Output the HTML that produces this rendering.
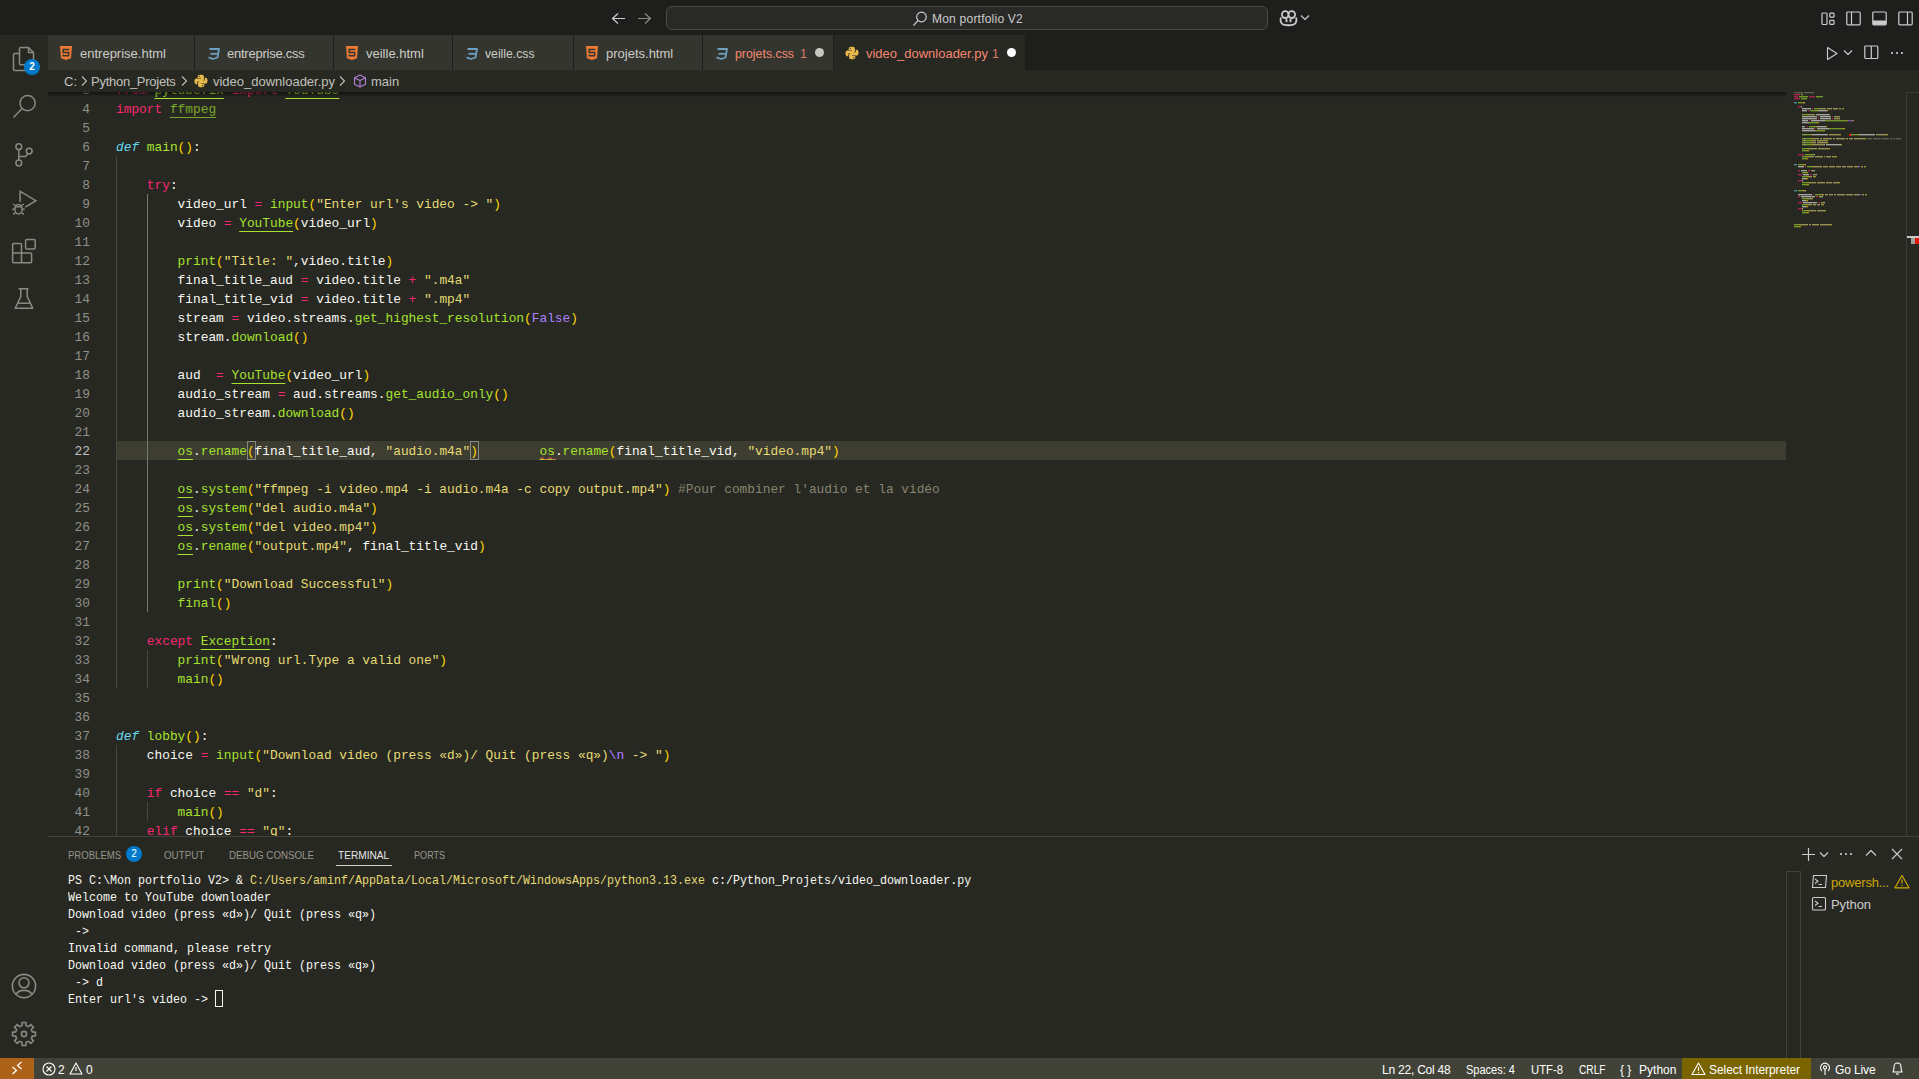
<!DOCTYPE html><html><head><meta charset="utf-8"><style>
*{margin:0;padding:0;box-sizing:border-box}
html,body{width:1919px;height:1079px;overflow:hidden;background:#272822}
body{position:relative;font-family:"Liberation Sans",sans-serif}
.abs{position:absolute}
.ui{position:absolute;white-space:pre;font-family:"Liberation Sans",sans-serif}
.ln{position:absolute;left:116px;height:19px;line-height:19px;white-space:pre;font-family:"Liberation Mono",monospace;font-size:12.83px;color:#f8f8f2}
.num{position:absolute;left:50px;width:40px;text-align:right;height:19px;line-height:19px;font-family:"Liberation Mono",monospace;font-size:12.83px;color:#90908a}
.num.act{color:#c2c2bf}
.k,.o{color:#f92672}.d{color:#66d9ef;font-style:italic}.f{color:#a6e22e}
.c{color:#a6e22e;text-decoration:underline;text-underline-offset:4px;text-decoration-thickness:1px}
.s{color:#e6db74}.n{color:#ae81ff}.m{color:#88846f}.p{color:#f8f8f2}.b{color:#ffd700}
.tl{position:absolute;left:68px;height:17px;line-height:17px;white-space:pre;font-family:"Liberation Mono",monospace;font-size:13px;transform:scaleX(0.8974);transform-origin:0 0}
.tf{color:#f8f8f2}.ty{color:#e6db74}
.tab{position:absolute;top:35px;height:35px;background:#34352f}
.tab .t{position:absolute;top:0;line-height:35px;font-size:13px;color:#ccccc7;white-space:pre}
</style></head><body>
<div class="abs" style="left:0;top:0;width:1919px;height:35px;background:#1e1f1c"></div>
<svg style="position:absolute;left:611px;top:12px" width="15" height="13" viewBox="0 0 15 13" ><path d="M7 1.5 L1.5 6.5 L7 11.5 M1.5 6.5 H14" fill="none" stroke="#cccccc" stroke-width="1.2" stroke-linejoin="round"/></svg>
<svg style="position:absolute;left:637px;top:12px" width="15" height="13" viewBox="0 0 15 13" ><path d="M8 1.5 L13.5 6.5 L8 11.5 M13.5 6.5 H1" fill="none" stroke="#8b8b87" stroke-width="1.2" stroke-linejoin="round"/></svg>
<div class="abs" style="left:666px;top:6px;width:602px;height:24px;border:1px solid #4a4a47;border-radius:6px;background:#292a27"></div>
<svg style="position:absolute;left:912px;top:11px" width="16" height="16" viewBox="0 0 16 16" ><g fill="none" stroke="#cccccc" stroke-width="1.2"><circle cx="9.5" cy="6" r="4.8"/><path d="M6.2 9.4 L1.5 14.5"/></g></svg>
<div class="ui" style="left:932px;top:11px;font-size:12px;line-height:16px;color:#cccccc;font-weight:400;letter-spacing:0.226px">Mon portfolio V2</div>
<svg style="position:absolute;left:1279px;top:9px" width="19" height="18" viewBox="0 0 19 18" ><g fill="none" stroke="#cccccc" stroke-width="1.8"><circle cx="6.3" cy="5.6" r="3.4"/><circle cx="12.7" cy="5.6" r="3.4"/><path d="M2.2 8.5 C1 10 1.2 14.6 4.5 15.6 C7.5 16.4 11.5 16.4 14.5 15.6 C17.8 14.6 18 10 16.8 8.5"/></g><rect x="6.6" y="10" width="1.8" height="3.2" fill="#cccccc"/><rect x="10.6" y="10" width="1.8" height="3.2" fill="#cccccc"/></svg>
<svg style="position:absolute;left:1300px;top:14px" width="10" height="7" viewBox="0 0 10 7" ><path d="M1 1.5 L5 5.5 L9 1.5" fill="none" stroke="#cccccc" stroke-width="1.1" stroke-linejoin="round"/></svg>
<svg style="position:absolute;left:1821px;top:12px" width="15" height="14" viewBox="0 0 15 14" ><g fill="none" stroke="#cccccc" stroke-width="1.2"><rect x="1" y="1" width="5" height="11.5" rx="1"/><rect x="8.8" y="1.2" width="4.2" height="4" rx="0.8"/><rect x="8.8" y="8.3" width="4.2" height="4" rx="0.8"/></g></svg>
<svg style="position:absolute;left:1846px;top:11px" width="15" height="15" viewBox="0 0 15 15" ><g fill="none" stroke="#cccccc" stroke-width="1.2"><rect x="0.8" y="1" width="13.4" height="12.8" rx="1"/><path d="M5.5 1 V13.8"/></g></svg>
<svg style="position:absolute;left:1872px;top:11px" width="15" height="15" viewBox="0 0 15 15" ><g fill="none" stroke="#cccccc" stroke-width="1.2"><rect x="0.8" y="1" width="13.4" height="12.8" rx="1"/></g><rect x="0.8" y="9.5" width="13.4" height="4.3" rx="1" fill="#cccccc"/></svg>
<svg style="position:absolute;left:1898px;top:11px" width="15" height="15" viewBox="0 0 15 15" ><g fill="none" stroke="#cccccc" stroke-width="1.2"><rect x="0.8" y="1" width="13.4" height="12.8" rx="1"/><path d="M9.5 1 V13.8"/></g></svg>
<div class="abs" style="left:0;top:35px;width:48px;height:1023px;background:#272822"></div>
<svg style="position:absolute;left:12px;top:45px" width="26" height="28" viewBox="0 0 26 28" ><g fill="none" stroke="#8a8a84" stroke-width="1.5" stroke-linejoin="round"><path d="M8.5 2.5 H16.5 L21.5 7.5 V18.8 A1 1 0 0 1 20.5 19.8 H8.5 A1 1 0 0 1 7.5 18.8 V3.5 A1 1 0 0 1 8.5 2.5 Z"/><path d="M16.5 2.5 V7.5 H21.5"/><path d="M7.5 8.5 H2.5 A1 1 0 0 0 1.5 9.5 V24.5 A1 1 0 0 0 2.5 25.5 H14"/></g></svg><div style="position:absolute;left:24px;top:59px;width:16px;height:16px;border-radius:8px;background:#007acc;color:#fff;font:600 10px/16px 'Liberation Sans',sans-serif;text-align:center">2</div><svg style="position:absolute;left:12px;top:93px" width="26" height="26" viewBox="0 0 26 26" ><g fill="none" stroke="#8a8a84" stroke-width="1.5"><circle cx="15.6" cy="10.2" r="7.6"/><path d="M10.2 15.6 L1.5 24.6"/></g></svg><svg style="position:absolute;left:12px;top:140px" width="26" height="28" viewBox="0 0 26 28" ><g fill="none" stroke="#8a8a84" stroke-width="1.5"><circle cx="6.8" cy="6.7" r="2.9"/><circle cx="6.8" cy="23" r="2.9"/><circle cx="17.2" cy="11.1" r="2.9"/><path d="M6.8 9.6 V20.1"/><path d="M16 13.8 L13.5 16.6 H6.8"/></g></svg><svg style="position:absolute;left:10px;top:190px" width="28" height="28" viewBox="0 0 28 28" ><g fill="none" stroke="#8a8a84" stroke-width="1.5"><path d="M10.1 12 V1.4 L25.9 10.7 L15.3 17.2"/><ellipse cx="8.5" cy="19.2" rx="3.6" ry="4.8"/><path d="M5 16.8 H12 M4.9 19.2 H2.3 M12.1 19.2 H14.7 M5.3 15.5 L3.2 14 M11.7 15.5 L13.8 14 M5.3 22.8 L3.2 24.3 M11.7 22.8 L13.8 24.3"/></g></svg><svg style="position:absolute;left:11px;top:238px" width="26" height="28" viewBox="0 0 26 28" ><g fill="none" stroke="#8a8a84" stroke-width="1.5" stroke-linejoin="round"><rect x="14.6" y="1.4" width="9.6" height="9.6" rx="1.3"/><path d="M2.6 5.6 H9.5 A1 1 0 0 1 10.5 6.6 V15 H19.6 A1 1 0 0 1 20.6 16 V23.8 A1 1 0 0 1 19.6 24.8 H2.6 A1 1 0 0 1 1.6 23.8 V6.6 A1 1 0 0 1 2.6 5.6 Z"/><path d="M1.6 15 H10.5 V24.8"/></g></svg><svg style="position:absolute;left:13px;top:287px" width="24" height="28" viewBox="0 0 24 28" ><g fill="none" stroke="#8a8a84" stroke-width="1.5" stroke-linejoin="round"><path d="M5.5 1.8 H15.5 M7.8 1.8 V9.5 L2.2 21.2 H19.8 L14.2 9.5 V1.8"/><path d="M4.8 16.2 H17.2"/></g></svg><svg style="position:absolute;left:10px;top:972px" width="28" height="28" viewBox="0 0 28 28" ><g fill="none" stroke="#8a8a84" stroke-width="1.6"><circle cx="14" cy="14" r="11.6"/><circle cx="14" cy="10.8" r="5"/><path d="M6.3 22.6 C8 17 20 17 21.7 22.6"/></g></svg><svg style="position:absolute;left:10px;top:1020px" width="28" height="28" viewBox="0 0 28 28" ><g fill="none" stroke="#8a8a84" stroke-width="1.6" stroke-linejoin="miter"><path d="M11.92 5.66 L12.19 2.54 L15.81 2.54 L16.08 5.66 L18.43 6.63 L20.82 4.62 L23.38 7.18 L21.37 9.57 L22.34 11.92 L25.46 12.19 L25.46 15.81 L22.34 16.08 L21.37 18.43 L23.38 20.82 L20.82 23.38 L18.43 21.37 L16.08 22.34 L15.81 25.46 L12.19 25.46 L11.92 22.34 L9.57 21.37 L7.18 23.38 L4.62 20.82 L6.63 18.43 L5.66 16.08 L2.54 15.81 L2.54 12.19 L5.66 11.92 L6.63 9.57 L4.62 7.18 L7.18 4.62 L9.57 6.63 Z"/><circle cx="14" cy="14" r="2.6"/></g></svg>
<div class="abs" style="left:48px;top:35px;width:1871px;height:35px;background:#1e1f1c"></div>
<div class="abs" style="left:48px;top:35px;width:146px;height:35px;background:#34352f"></div>
<svg style="position:absolute;left:60px;top:46px" width="12" height="14" viewBox="0 0 12 14" ><path d="M0 0 H12 L11 12.3 L6 14 L1 12.3 Z" fill="#ec7b37"/><path d="M9.3 3.4 H3.2 V6.5 H8.6 V9.8 H3.2 V8.6" fill="none" stroke="#34352f" stroke-width="1.5"/></svg>
<div class="ui" style="left:80px;top:46px;font-size:13px;line-height:16px;color:#ccccc7;font-weight:400">entreprise.html</div>
<div class="abs" style="left:195px;top:35px;width:138px;height:35px;background:#34352f"></div>
<svg style="position:absolute;left:207px;top:47px" width="13" height="13" viewBox="0 0 13 13" ><g fill="none" stroke="#6c9fc0" stroke-width="1.8" stroke-linejoin="round"><path d="M2.5 2 H12 L10.5 10.5 L6 12 L1.5 10.3"/><path d="M3.5 6.8 H10.5"/></g></svg>
<div class="ui" style="left:227px;top:46px;font-size:13px;line-height:16px;color:#ccccc7;font-weight:400;letter-spacing:-0.244px">entreprise.css</div>
<div class="abs" style="left:334px;top:35px;width:118px;height:35px;background:#34352f"></div>
<svg style="position:absolute;left:346px;top:46px" width="12" height="14" viewBox="0 0 12 14" ><path d="M0 0 H12 L11 12.3 L6 14 L1 12.3 Z" fill="#ec7b37"/><path d="M9.3 3.4 H3.2 V6.5 H8.6 V9.8 H3.2 V8.6" fill="none" stroke="#34352f" stroke-width="1.5"/></svg>
<div class="ui" style="left:366px;top:46px;font-size:13px;line-height:16px;color:#ccccc7;font-weight:400">veille.html</div>
<div class="abs" style="left:453px;top:35px;width:120px;height:35px;background:#34352f"></div>
<svg style="position:absolute;left:465px;top:47px" width="13" height="13" viewBox="0 0 13 13" ><g fill="none" stroke="#6c9fc0" stroke-width="1.8" stroke-linejoin="round"><path d="M2.5 2 H12 L10.5 10.5 L6 12 L1.5 10.3"/><path d="M3.5 6.8 H10.5"/></g></svg>
<div class="ui" style="left:485px;top:46px;font-size:13px;line-height:16px;color:#ccccc7;font-weight:400;transform:scaleX(0.9384);transform-origin:0 0">veille.css</div>
<div class="abs" style="left:574px;top:35px;width:128px;height:35px;background:#34352f"></div>
<svg style="position:absolute;left:586px;top:46px" width="12" height="14" viewBox="0 0 12 14" ><path d="M0 0 H12 L11 12.3 L6 14 L1 12.3 Z" fill="#ec7b37"/><path d="M9.3 3.4 H3.2 V6.5 H8.6 V9.8 H3.2 V8.6" fill="none" stroke="#34352f" stroke-width="1.5"/></svg>
<div class="ui" style="left:606px;top:46px;font-size:13px;line-height:16px;color:#ccccc7;font-weight:400">projets.html</div>
<div class="abs" style="left:703px;top:35px;width:130px;height:35px;background:#34352f"></div>
<svg style="position:absolute;left:715px;top:47px" width="13" height="13" viewBox="0 0 13 13" ><g fill="none" stroke="#6c9fc0" stroke-width="1.8" stroke-linejoin="round"><path d="M2.5 2 H12 L10.5 10.5 L6 12 L1.5 10.3"/><path d="M3.5 6.8 H10.5"/></g></svg>
<div class="ui" style="left:735px;top:46px;font-size:13px;line-height:16px;color:#f48771;font-weight:400;transform:scaleX(0.9495);transform-origin:0 0">projets.css</div>
<div class="ui" style="left:800px;top:46px;font-size:12.5px;line-height:16px;color:#d8796c">1</div>
<div style="position:absolute;left:815px;top:48px;width:9px;height:9px;border-radius:5px;background:#c8c8c3"></div>
<div class="abs" style="left:834px;top:35px;width:191px;height:35px;background:#272822"></div>
<svg style="position:absolute;left:845px;top:46px" width="14" height="14" viewBox="0 0 14 14" ><path d="M6.9 0.8 C3.5 0.8 3.7 2.3 3.7 2.3 V3.9 H7 V4.4 H2.4 C2.4 4.4 0.5 4.2 0.5 7.3 C0.5 10.4 2.2 10.3 2.2 10.3 H3.3 V8.7 C3.3 8.7 3.2 7 5 7 H8.2 C8.2 7 9.9 7 9.9 5.4 V2.6 C9.9 2.6 10.1 0.8 6.9 0.8 Z" fill="#e8b94b"/><path d="M7.1 13.2 C10.5 13.2 10.3 11.7 10.3 11.7 V10.1 H7 V9.6 H11.6 C11.6 9.6 13.5 9.8 13.5 6.7 C13.5 3.6 11.8 3.7 11.8 3.7 H10.7 V5.3 C10.7 5.3 10.8 7 9 7 H5.8 C5.8 7 4.1 7 4.1 8.6 V11.4 C4.1 11.4 3.9 13.2 7.1 13.2 Z" fill="#e8b94b"/><circle cx="5.3" cy="2.3" r="0.6" fill="#272822"/><circle cx="8.7" cy="11.7" r="0.6" fill="#272822"/></svg>
<div class="ui" style="left:866px;top:46px;font-size:13px;line-height:16px;color:#f48771;font-weight:400;letter-spacing:-0.008px">video_downloader.py</div>
<div class="ui" style="left:992px;top:46px;font-size:12.5px;line-height:16px;color:#d8796c">1</div>
<div style="position:absolute;left:1007px;top:48px;width:9px;height:9px;border-radius:5px;background:#ffffff"></div>
<svg style="position:absolute;left:1826px;top:46px" width="12" height="15" viewBox="0 0 12 15" ><path d="M1.5 1.5 L11 7.5 L1.5 13.5 Z" fill="none" stroke="#cccccc" stroke-width="1.1" stroke-linejoin="round"/></svg>
<svg style="position:absolute;left:1843px;top:49px" width="10" height="7" viewBox="0 0 10 7" ><path d="M1 1.5 L5 5.5 L9 1.5" fill="none" stroke="#cccccc" stroke-width="1.1" stroke-linejoin="round"/></svg>
<svg style="position:absolute;left:1864px;top:45px" width="15" height="15" viewBox="0 0 15 15" ><g fill="none" stroke="#cccccc" stroke-width="1.2"><rect x="0.8" y="1" width="13" height="12.5" rx="1"/><path d="M7.3 1 V13.5"/></g></svg>
<svg style="position:absolute;left:1890px;top:51px" width="16" height="4" viewBox="0 0 16 4" ><circle cx="2" cy="2" r="1.1" fill="#cccccc"/><circle cx="7" cy="2" r="1.1" fill="#cccccc"/><circle cx="12" cy="2" r="1.1" fill="#cccccc"/></svg>
<div class="abs" style="left:48px;top:92px;width:1871px;height:744px;overflow:hidden">
<div class="abs" style="left:-48px;top:-92px;width:1919px;height:1079px">
<div class="abs" style="left:116px;top:441px;width:1670px;height:19px;background:#3e3d32"></div>
<div class="abs" style="left:116px;top:156px;width:1px;height:532px;background:#464741"></div>
<div class="abs" style="left:147px;top:194px;width:1px;height:418px;background:#767771"></div>
<div class="abs" style="left:147px;top:650px;width:1px;height:38px;background:#464741"></div>
<div class="abs" style="left:116px;top:745px;width:1px;height:95px;background:#464741"></div>
<div class="abs" style="left:147px;top:802px;width:1px;height:19px;background:#464741"></div>
<div class="abs" style="left:247px;top:441px;width:9px;height:19px;border:1px solid #888886"></div>
<div class="abs" style="left:470px;top:441px;width:9px;height:19px;border:1px solid #888886"></div>
<div class="num" style="top:81px">3</div>
<div class="num" style="top:100px">4</div>
<div class="num" style="top:119px">5</div>
<div class="num" style="top:138px">6</div>
<div class="num" style="top:157px">7</div>
<div class="num" style="top:176px">8</div>
<div class="num" style="top:195px">9</div>
<div class="num" style="top:214px">10</div>
<div class="num" style="top:233px">11</div>
<div class="num" style="top:252px">12</div>
<div class="num" style="top:271px">13</div>
<div class="num" style="top:290px">14</div>
<div class="num" style="top:309px">15</div>
<div class="num" style="top:328px">16</div>
<div class="num" style="top:347px">17</div>
<div class="num" style="top:366px">18</div>
<div class="num" style="top:385px">19</div>
<div class="num" style="top:404px">20</div>
<div class="num" style="top:423px">21</div>
<div class="num act" style="top:442px">22</div>
<div class="num" style="top:461px">23</div>
<div class="num" style="top:480px">24</div>
<div class="num" style="top:499px">25</div>
<div class="num" style="top:518px">26</div>
<div class="num" style="top:537px">27</div>
<div class="num" style="top:556px">28</div>
<div class="num" style="top:575px">29</div>
<div class="num" style="top:594px">30</div>
<div class="num" style="top:613px">31</div>
<div class="num" style="top:632px">32</div>
<div class="num" style="top:651px">33</div>
<div class="num" style="top:670px">34</div>
<div class="num" style="top:689px">35</div>
<div class="num" style="top:708px">36</div>
<div class="num" style="top:727px">37</div>
<div class="num" style="top:746px">38</div>
<div class="num" style="top:765px">39</div>
<div class="num" style="top:784px">40</div>
<div class="num" style="top:803px">41</div>
<div class="num" style="top:822px">42</div>
<div class="ln" style="top:81px"><span class="k">from</span> <span class="c">pytubefix</span> <span class="k">import</span> <span class="c">YouTube</span></div>
<div class="ln" style="top:100px"><span class="k">import</span> <span class="c" style="opacity:0.67">ffmpeg</span></div>
<div class="ln" style="top:119px"></div>
<div class="ln" style="top:138px"><span class="d">def</span> <span class="f">main</span><span class="b">(</span><span class="b">)</span><span class="p">:</span></div>
<div class="ln" style="top:157px"></div>
<div class="ln" style="top:176px">    <span class="k">try</span><span class="p">:</span></div>
<div class="ln" style="top:195px">        <span class="p">video_url</span> <span class="o">=</span> <span class="f">input</span><span class="b">(</span><span class="s">"Enter url's video -&gt; "</span><span class="b">)</span></div>
<div class="ln" style="top:214px">        <span class="p">video</span> <span class="o">=</span> <span class="c">YouTube</span><span class="b">(</span><span class="p">video_url</span><span class="b">)</span></div>
<div class="ln" style="top:233px"></div>
<div class="ln" style="top:252px">        <span class="f">print</span><span class="b">(</span><span class="s">"Title: "</span><span class="p">,</span><span class="p">video</span><span class="p">.</span><span class="p">title</span><span class="b">)</span></div>
<div class="ln" style="top:271px">        <span class="p">final_title_aud</span> <span class="o">=</span> <span class="p">video</span><span class="p">.</span><span class="p">title</span> <span class="o">+</span> <span class="s">".m4a"</span></div>
<div class="ln" style="top:290px">        <span class="p">final_title_vid</span> <span class="o">=</span> <span class="p">video</span><span class="p">.</span><span class="p">title</span> <span class="o">+</span> <span class="s">".mp4"</span></div>
<div class="ln" style="top:309px">        <span class="p">stream</span> <span class="o">=</span> <span class="p">video</span><span class="p">.</span><span class="p">streams</span><span class="p">.</span><span class="f">get_highest_resolution</span><span class="b">(</span><span class="n">False</span><span class="b">)</span></div>
<div class="ln" style="top:328px">        <span class="p">stream</span><span class="p">.</span><span class="f">download</span><span class="b">(</span><span class="b">)</span></div>
<div class="ln" style="top:347px"></div>
<div class="ln" style="top:366px">        <span class="p">aud</span>  <span class="o">=</span> <span class="c">YouTube</span><span class="b">(</span><span class="p">video_url</span><span class="b">)</span></div>
<div class="ln" style="top:385px">        <span class="p">audio_stream</span> <span class="o">=</span> <span class="p">aud</span><span class="p">.</span><span class="p">streams</span><span class="p">.</span><span class="f">get_audio_only</span><span class="b">(</span><span class="b">)</span></div>
<div class="ln" style="top:404px">        <span class="p">audio_stream</span><span class="p">.</span><span class="f">download</span><span class="b">(</span><span class="b">)</span></div>
<div class="ln" style="top:423px"></div>
<div class="ln" style="top:442px">        <span class="c">os</span><span class="p">.</span><span class="f">rename</span><span class="b">(</span><span class="p">final_title_aud</span><span class="p">,</span> <span class="s">"audio.m4a"</span><span class="b">)</span>        <span class="c">os</span><span class="p">.</span><span class="f">rename</span><span class="b">(</span><span class="p">final_title_vid</span><span class="p">,</span> <span class="s">"video.mp4"</span><span class="b">)</span></div>
<div class="ln" style="top:461px"></div>
<div class="ln" style="top:480px">        <span class="c">os</span><span class="p">.</span><span class="f">system</span><span class="b">(</span><span class="s">"ffmpeg -i video.mp4 -i audio.m4a -c copy output.mp4"</span><span class="b">)</span> <span class="m">#Pour combiner l'audio et la vidéo</span></div>
<div class="ln" style="top:499px">        <span class="c">os</span><span class="p">.</span><span class="f">system</span><span class="b">(</span><span class="s">"del audio.m4a"</span><span class="b">)</span></div>
<div class="ln" style="top:518px">        <span class="c">os</span><span class="p">.</span><span class="f">system</span><span class="b">(</span><span class="s">"del video.mp4"</span><span class="b">)</span></div>
<div class="ln" style="top:537px">        <span class="c">os</span><span class="p">.</span><span class="f">rename</span><span class="b">(</span><span class="s">"output.mp4"</span><span class="p">,</span> <span class="p">final_title_vid</span><span class="b">)</span></div>
<div class="ln" style="top:556px"></div>
<div class="ln" style="top:575px">        <span class="f">print</span><span class="b">(</span><span class="s">"Download Successful"</span><span class="b">)</span></div>
<div class="ln" style="top:594px">        <span class="f">final</span><span class="b">(</span><span class="b">)</span></div>
<div class="ln" style="top:613px"></div>
<div class="ln" style="top:632px">    <span class="k">except</span> <span class="c">Exception</span><span class="p">:</span></div>
<div class="ln" style="top:651px">        <span class="f">print</span><span class="b">(</span><span class="s">"Wrong url.Type a valid one"</span><span class="b">)</span></div>
<div class="ln" style="top:670px">        <span class="f">main</span><span class="b">(</span><span class="b">)</span></div>
<div class="ln" style="top:689px"></div>
<div class="ln" style="top:708px"></div>
<div class="ln" style="top:727px"><span class="d">def</span> <span class="f">lobby</span><span class="b">(</span><span class="b">)</span><span class="p">:</span></div>
<div class="ln" style="top:746px">    <span class="p">choice</span> <span class="o">=</span> <span class="f">input</span><span class="b">(</span><span class="s">"Download video (press «d»)/ Quit (press «q»)</span><span class="n">\n</span><span class="s"> -&gt; "</span><span class="b">)</span></div>
<div class="ln" style="top:765px"></div>
<div class="ln" style="top:784px">    <span class="k">if</span> <span class="p">choice</span> <span class="o">==</span> <span class="s">"d"</span><span class="p">:</span></div>
<div class="ln" style="top:803px">        <span class="f">main</span><span class="b">(</span><span class="b">)</span></div>
<div class="ln" style="top:822px">    <span class="k">elif</span> <span class="p">choice</span> <span class="o">==</span> <span class="s">"q"</span><span class="p">:</span></div>
<svg style="position:absolute;left:540px;top:456px" width="16" height="4" viewBox="0 0 16 4" ><path d="M0 3 Q2 0 4 3 T8 3 T12 3 T16 3" fill="none" stroke="#f14c4c" stroke-width="1"/></svg>
</div></div>
<div class="abs" style="left:48px;top:70px;width:1871px;height:22px;background:#272822"></div>
<div class="abs" style="left:48px;top:92px;width:1738px;height:5px;background:linear-gradient(#00000090,#00000000)"></div>
<div class="ui" style="left:64px;top:74px;font-size:13px;line-height:16px;color:#c0c0bb;font-weight:400">C:</div>
<svg style="position:absolute;left:80px;top:75px" width="8" height="12" viewBox="0 0 8 12" ><path d="M2 1.5 L6.5 6 L2 10.5" fill="none" stroke="#c0c0bb" stroke-width="1.1"/></svg>
<div class="ui" style="left:91px;top:74px;font-size:13px;line-height:16px;color:#c0c0bb;font-weight:400;letter-spacing:-0.262px">Python_Projets</div>
<svg style="position:absolute;left:180px;top:75px" width="8" height="12" viewBox="0 0 8 12" ><path d="M2 1.5 L6.5 6 L2 10.5" fill="none" stroke="#c0c0bb" stroke-width="1.1"/></svg>
<svg style="position:absolute;left:194px;top:74px" width="14" height="14" viewBox="0 0 14 14" ><path d="M6.9 0.8 C3.5 0.8 3.7 2.3 3.7 2.3 V3.9 H7 V4.4 H2.4 C2.4 4.4 0.5 4.2 0.5 7.3 C0.5 10.4 2.2 10.3 2.2 10.3 H3.3 V8.7 C3.3 8.7 3.2 7 5 7 H8.2 C8.2 7 9.9 7 9.9 5.4 V2.6 C9.9 2.6 10.1 0.8 6.9 0.8 Z" fill="#e8b94b"/><path d="M7.1 13.2 C10.5 13.2 10.3 11.7 10.3 11.7 V10.1 H7 V9.6 H11.6 C11.6 9.6 13.5 9.8 13.5 6.7 C13.5 3.6 11.8 3.7 11.8 3.7 H10.7 V5.3 C10.7 5.3 10.8 7 9 7 H5.8 C5.8 7 4.1 7 4.1 8.6 V11.4 C4.1 11.4 3.9 13.2 7.1 13.2 Z" fill="#e8b94b"/><circle cx="5.3" cy="2.3" r="0.6" fill="#272822"/><circle cx="8.7" cy="11.7" r="0.6" fill="#272822"/></svg>
<div class="ui" style="left:213px;top:74px;font-size:13px;line-height:16px;color:#c0c0bb;font-weight:400;letter-spacing:-0.008px">video_downloader.py</div>
<svg style="position:absolute;left:338px;top:75px" width="8" height="12" viewBox="0 0 8 12" ><path d="M2 1.5 L6.5 6 L2 10.5" fill="none" stroke="#c0c0bb" stroke-width="1.1"/></svg>
<svg style="position:absolute;left:353px;top:74px" width="14" height="14" viewBox="0 0 14 14" ><g fill="none" stroke="#b180d7" stroke-width="1.1" stroke-linejoin="round"><path d="M7 1 L12.5 3.8 V10.2 L7 13 L1.5 10.2 V3.8 Z"/><path d="M1.5 3.8 L7 6.6 L12.5 3.8 M7 6.6 V13"/></g></svg>
<div class="ui" style="left:371px;top:74px;font-size:13px;line-height:16px;color:#c0c0bb;font-weight:400">main</div>
<svg class="abs" style="left:0;top:0" width="1919" height="300"><g opacity="0.6"><rect x="1794" y="92" width="1" height="1" fill="#88846f"/><rect x="1796" y="92" width="7" height="1" fill="#88846f"/><rect x="1804" y="92" width="10" height="1" fill="#88846f"/><rect x="1794" y="94" width="6" height="1" fill="#f92672"/><rect x="1801" y="94" width="2" height="1" fill="#a6e22e"/><rect x="1794" y="96" width="4" height="1" fill="#f92672"/><rect x="1799" y="96" width="9" height="1" fill="#a6e22e"/><rect x="1809" y="96" width="6" height="1" fill="#f92672"/><rect x="1816" y="96" width="7" height="1" fill="#a6e22e"/><rect x="1794" y="98" width="6" height="1" fill="#f92672"/><rect x="1801" y="98" width="6" height="1" fill="#a6e22e"/><rect x="1794" y="102" width="3" height="1" fill="#66d9ef"/><rect x="1798" y="102" width="4" height="1" fill="#a6e22e"/><rect x="1802" y="102" width="1" height="1" fill="#ffd700"/><rect x="1803" y="102" width="1" height="1" fill="#ffd700"/><rect x="1804" y="102" width="1" height="1" fill="#f8f8f2"/><rect x="1798" y="106" width="3" height="1" fill="#f92672"/><rect x="1801" y="106" width="1" height="1" fill="#f8f8f2"/><rect x="1802" y="108" width="9" height="1" fill="#f8f8f2"/><rect x="1812" y="108" width="1" height="1" fill="#f92672"/><rect x="1814" y="108" width="5" height="1" fill="#a6e22e"/><rect x="1819" y="108" width="1" height="1" fill="#ffd700"/><rect x="1820" y="108" width="6" height="1" fill="#e6db74"/><rect x="1827" y="108" width="5" height="1" fill="#e6db74"/><rect x="1833" y="108" width="5" height="1" fill="#e6db74"/><rect x="1839" y="108" width="2" height="1" fill="#e6db74"/><rect x="1842" y="108" width="1" height="1" fill="#e6db74"/><rect x="1843" y="108" width="1" height="1" fill="#ffd700"/><rect x="1802" y="110" width="5" height="1" fill="#f8f8f2"/><rect x="1808" y="110" width="1" height="1" fill="#f92672"/><rect x="1810" y="110" width="7" height="1" fill="#a6e22e"/><rect x="1817" y="110" width="1" height="1" fill="#ffd700"/><rect x="1818" y="110" width="9" height="1" fill="#f8f8f2"/><rect x="1827" y="110" width="1" height="1" fill="#ffd700"/><rect x="1802" y="114" width="5" height="1" fill="#a6e22e"/><rect x="1807" y="114" width="1" height="1" fill="#ffd700"/><rect x="1808" y="114" width="7" height="1" fill="#e6db74"/><rect x="1816" y="114" width="1" height="1" fill="#e6db74"/><rect x="1817" y="114" width="1" height="1" fill="#f8f8f2"/><rect x="1818" y="114" width="5" height="1" fill="#f8f8f2"/><rect x="1823" y="114" width="1" height="1" fill="#f8f8f2"/><rect x="1824" y="114" width="5" height="1" fill="#f8f8f2"/><rect x="1829" y="114" width="1" height="1" fill="#ffd700"/><rect x="1802" y="116" width="15" height="1" fill="#f8f8f2"/><rect x="1818" y="116" width="1" height="1" fill="#f92672"/><rect x="1820" y="116" width="5" height="1" fill="#f8f8f2"/><rect x="1825" y="116" width="1" height="1" fill="#f8f8f2"/><rect x="1826" y="116" width="5" height="1" fill="#f8f8f2"/><rect x="1832" y="116" width="1" height="1" fill="#f92672"/><rect x="1834" y="116" width="6" height="1" fill="#e6db74"/><rect x="1802" y="118" width="15" height="1" fill="#f8f8f2"/><rect x="1818" y="118" width="1" height="1" fill="#f92672"/><rect x="1820" y="118" width="5" height="1" fill="#f8f8f2"/><rect x="1825" y="118" width="1" height="1" fill="#f8f8f2"/><rect x="1826" y="118" width="5" height="1" fill="#f8f8f2"/><rect x="1832" y="118" width="1" height="1" fill="#f92672"/><rect x="1834" y="118" width="6" height="1" fill="#e6db74"/><rect x="1802" y="120" width="6" height="1" fill="#f8f8f2"/><rect x="1809" y="120" width="1" height="1" fill="#f92672"/><rect x="1811" y="120" width="5" height="1" fill="#f8f8f2"/><rect x="1816" y="120" width="1" height="1" fill="#f8f8f2"/><rect x="1817" y="120" width="7" height="1" fill="#f8f8f2"/><rect x="1824" y="120" width="1" height="1" fill="#f8f8f2"/><rect x="1825" y="120" width="22" height="1" fill="#a6e22e"/><rect x="1847" y="120" width="1" height="1" fill="#ffd700"/><rect x="1848" y="120" width="5" height="1" fill="#ae81ff"/><rect x="1853" y="120" width="1" height="1" fill="#ffd700"/><rect x="1802" y="122" width="6" height="1" fill="#f8f8f2"/><rect x="1808" y="122" width="1" height="1" fill="#f8f8f2"/><rect x="1809" y="122" width="8" height="1" fill="#a6e22e"/><rect x="1817" y="122" width="1" height="1" fill="#ffd700"/><rect x="1818" y="122" width="1" height="1" fill="#ffd700"/><rect x="1802" y="126" width="3" height="1" fill="#f8f8f2"/><rect x="1807" y="126" width="1" height="1" fill="#f92672"/><rect x="1809" y="126" width="7" height="1" fill="#a6e22e"/><rect x="1816" y="126" width="1" height="1" fill="#ffd700"/><rect x="1817" y="126" width="9" height="1" fill="#f8f8f2"/><rect x="1826" y="126" width="1" height="1" fill="#ffd700"/><rect x="1802" y="128" width="12" height="1" fill="#f8f8f2"/><rect x="1815" y="128" width="1" height="1" fill="#f92672"/><rect x="1817" y="128" width="3" height="1" fill="#f8f8f2"/><rect x="1820" y="128" width="1" height="1" fill="#f8f8f2"/><rect x="1821" y="128" width="7" height="1" fill="#f8f8f2"/><rect x="1828" y="128" width="1" height="1" fill="#f8f8f2"/><rect x="1829" y="128" width="14" height="1" fill="#a6e22e"/><rect x="1843" y="128" width="1" height="1" fill="#ffd700"/><rect x="1844" y="128" width="1" height="1" fill="#ffd700"/><rect x="1802" y="130" width="12" height="1" fill="#f8f8f2"/><rect x="1814" y="130" width="1" height="1" fill="#f8f8f2"/><rect x="1815" y="130" width="8" height="1" fill="#a6e22e"/><rect x="1823" y="130" width="1" height="1" fill="#ffd700"/><rect x="1824" y="130" width="1" height="1" fill="#ffd700"/><rect x="1802" y="134" width="2" height="1" fill="#a6e22e"/><rect x="1804" y="134" width="1" height="1" fill="#f8f8f2"/><rect x="1805" y="134" width="6" height="1" fill="#a6e22e"/><rect x="1811" y="134" width="1" height="1" fill="#ffd700"/><rect x="1812" y="134" width="15" height="1" fill="#f8f8f2"/><rect x="1827" y="134" width="1" height="1" fill="#f8f8f2"/><rect x="1829" y="134" width="11" height="1" fill="#e6db74"/><rect x="1840" y="134" width="1" height="1" fill="#ffd700"/><rect x="1849" y="134" width="2" height="1" fill="#a6e22e"/><rect x="1851" y="134" width="1" height="1" fill="#f8f8f2"/><rect x="1852" y="134" width="6" height="1" fill="#a6e22e"/><rect x="1858" y="134" width="1" height="1" fill="#ffd700"/><rect x="1859" y="134" width="15" height="1" fill="#f8f8f2"/><rect x="1874" y="134" width="1" height="1" fill="#f8f8f2"/><rect x="1876" y="134" width="11" height="1" fill="#e6db74"/><rect x="1887" y="134" width="1" height="1" fill="#ffd700"/><rect x="1802" y="138" width="2" height="1" fill="#a6e22e"/><rect x="1804" y="138" width="1" height="1" fill="#f8f8f2"/><rect x="1805" y="138" width="6" height="1" fill="#a6e22e"/><rect x="1811" y="138" width="1" height="1" fill="#ffd700"/><rect x="1812" y="138" width="7" height="1" fill="#e6db74"/><rect x="1820" y="138" width="2" height="1" fill="#e6db74"/><rect x="1823" y="138" width="9" height="1" fill="#e6db74"/><rect x="1833" y="138" width="2" height="1" fill="#e6db74"/><rect x="1836" y="138" width="9" height="1" fill="#e6db74"/><rect x="1846" y="138" width="2" height="1" fill="#e6db74"/><rect x="1849" y="138" width="4" height="1" fill="#e6db74"/><rect x="1854" y="138" width="11" height="1" fill="#e6db74"/><rect x="1865" y="138" width="1" height="1" fill="#ffd700"/><rect x="1867" y="138" width="5" height="1" fill="#88846f"/><rect x="1873" y="138" width="8" height="1" fill="#88846f"/><rect x="1882" y="138" width="7" height="1" fill="#88846f"/><rect x="1890" y="138" width="2" height="1" fill="#88846f"/><rect x="1893" y="138" width="2" height="1" fill="#88846f"/><rect x="1896" y="138" width="5" height="1" fill="#88846f"/><rect x="1802" y="140" width="2" height="1" fill="#a6e22e"/><rect x="1804" y="140" width="1" height="1" fill="#f8f8f2"/><rect x="1805" y="140" width="6" height="1" fill="#a6e22e"/><rect x="1811" y="140" width="1" height="1" fill="#ffd700"/><rect x="1812" y="140" width="4" height="1" fill="#e6db74"/><rect x="1817" y="140" width="10" height="1" fill="#e6db74"/><rect x="1827" y="140" width="1" height="1" fill="#ffd700"/><rect x="1802" y="142" width="2" height="1" fill="#a6e22e"/><rect x="1804" y="142" width="1" height="1" fill="#f8f8f2"/><rect x="1805" y="142" width="6" height="1" fill="#a6e22e"/><rect x="1811" y="142" width="1" height="1" fill="#ffd700"/><rect x="1812" y="142" width="4" height="1" fill="#e6db74"/><rect x="1817" y="142" width="10" height="1" fill="#e6db74"/><rect x="1827" y="142" width="1" height="1" fill="#ffd700"/><rect x="1802" y="144" width="2" height="1" fill="#a6e22e"/><rect x="1804" y="144" width="1" height="1" fill="#f8f8f2"/><rect x="1805" y="144" width="6" height="1" fill="#a6e22e"/><rect x="1811" y="144" width="1" height="1" fill="#ffd700"/><rect x="1812" y="144" width="12" height="1" fill="#e6db74"/><rect x="1824" y="144" width="1" height="1" fill="#f8f8f2"/><rect x="1826" y="144" width="15" height="1" fill="#f8f8f2"/><rect x="1841" y="144" width="1" height="1" fill="#ffd700"/><rect x="1802" y="148" width="5" height="1" fill="#a6e22e"/><rect x="1807" y="148" width="1" height="1" fill="#ffd700"/><rect x="1808" y="148" width="9" height="1" fill="#e6db74"/><rect x="1818" y="148" width="11" height="1" fill="#e6db74"/><rect x="1829" y="148" width="1" height="1" fill="#ffd700"/><rect x="1802" y="150" width="5" height="1" fill="#a6e22e"/><rect x="1807" y="150" width="1" height="1" fill="#ffd700"/><rect x="1808" y="150" width="1" height="1" fill="#ffd700"/><rect x="1798" y="154" width="6" height="1" fill="#f92672"/><rect x="1805" y="154" width="9" height="1" fill="#a6e22e"/><rect x="1814" y="154" width="1" height="1" fill="#f8f8f2"/><rect x="1802" y="156" width="5" height="1" fill="#a6e22e"/><rect x="1807" y="156" width="1" height="1" fill="#ffd700"/><rect x="1808" y="156" width="6" height="1" fill="#e6db74"/><rect x="1815" y="156" width="8" height="1" fill="#e6db74"/><rect x="1824" y="156" width="1" height="1" fill="#e6db74"/><rect x="1826" y="156" width="5" height="1" fill="#e6db74"/><rect x="1832" y="156" width="4" height="1" fill="#e6db74"/><rect x="1836" y="156" width="1" height="1" fill="#ffd700"/><rect x="1802" y="158" width="4" height="1" fill="#a6e22e"/><rect x="1806" y="158" width="1" height="1" fill="#ffd700"/><rect x="1807" y="158" width="1" height="1" fill="#ffd700"/><rect x="1794" y="164" width="3" height="1" fill="#66d9ef"/><rect x="1798" y="164" width="5" height="1" fill="#a6e22e"/><rect x="1803" y="164" width="1" height="1" fill="#ffd700"/><rect x="1804" y="164" width="1" height="1" fill="#ffd700"/><rect x="1805" y="164" width="1" height="1" fill="#f8f8f2"/><rect x="1798" y="166" width="6" height="1" fill="#f8f8f2"/><rect x="1805" y="166" width="1" height="1" fill="#f92672"/><rect x="1807" y="166" width="5" height="1" fill="#a6e22e"/><rect x="1812" y="166" width="1" height="1" fill="#ffd700"/><rect x="1813" y="166" width="9" height="1" fill="#e6db74"/><rect x="1823" y="166" width="5" height="1" fill="#e6db74"/><rect x="1829" y="166" width="6" height="1" fill="#e6db74"/><rect x="1836" y="166" width="5" height="1" fill="#e6db74"/><rect x="1842" y="166" width="4" height="1" fill="#e6db74"/><rect x="1847" y="166" width="6" height="1" fill="#e6db74"/><rect x="1854" y="166" width="4" height="1" fill="#e6db74"/><rect x="1858" y="166" width="2" height="1" fill="#ae81ff"/><rect x="1861" y="166" width="2" height="1" fill="#e6db74"/><rect x="1864" y="166" width="1" height="1" fill="#e6db74"/><rect x="1865" y="166" width="1" height="1" fill="#ffd700"/><rect x="1798" y="170" width="2" height="1" fill="#f92672"/><rect x="1801" y="170" width="6" height="1" fill="#f8f8f2"/><rect x="1808" y="170" width="2" height="1" fill="#f92672"/><rect x="1811" y="170" width="3" height="1" fill="#e6db74"/><rect x="1814" y="170" width="1" height="1" fill="#f8f8f2"/><rect x="1802" y="172" width="4" height="1" fill="#a6e22e"/><rect x="1806" y="172" width="1" height="1" fill="#ffd700"/><rect x="1807" y="172" width="1" height="1" fill="#ffd700"/><rect x="1798" y="174" width="4" height="1" fill="#f92672"/><rect x="1803" y="174" width="6" height="1" fill="#f8f8f2"/><rect x="1810" y="174" width="2" height="1" fill="#f92672"/><rect x="1813" y="174" width="3" height="1" fill="#e6db74"/><rect x="1816" y="174" width="1" height="1" fill="#f8f8f2"/><rect x="1802" y="176" width="5" height="1" fill="#a6e22e"/><rect x="1807" y="176" width="1" height="1" fill="#ffd700"/><rect x="1808" y="176" width="4" height="1" fill="#e6db74"/><rect x="1813" y="176" width="2" height="1" fill="#e6db74"/><rect x="1815" y="176" width="1" height="1" fill="#ffd700"/><rect x="1802" y="178" width="4" height="1" fill="#f8f8f2"/><rect x="1806" y="178" width="1" height="1" fill="#ffd700"/><rect x="1807" y="178" width="1" height="1" fill="#ffd700"/><rect x="1798" y="180" width="4" height="1" fill="#f92672"/><rect x="1802" y="180" width="1" height="1" fill="#f8f8f2"/><rect x="1802" y="182" width="5" height="1" fill="#a6e22e"/><rect x="1807" y="182" width="1" height="1" fill="#ffd700"/><rect x="1808" y="182" width="8" height="1" fill="#e6db74"/><rect x="1817" y="182" width="8" height="1" fill="#e6db74"/><rect x="1826" y="182" width="6" height="1" fill="#e6db74"/><rect x="1833" y="182" width="6" height="1" fill="#e6db74"/><rect x="1839" y="182" width="1" height="1" fill="#ffd700"/><rect x="1802" y="184" width="5" height="1" fill="#a6e22e"/><rect x="1807" y="184" width="1" height="1" fill="#ffd700"/><rect x="1808" y="184" width="1" height="1" fill="#ffd700"/><rect x="1794" y="190" width="3" height="1" fill="#66d9ef"/><rect x="1798" y="190" width="5" height="1" fill="#a6e22e"/><rect x="1803" y="190" width="1" height="1" fill="#ffd700"/><rect x="1804" y="190" width="1" height="1" fill="#ffd700"/><rect x="1805" y="190" width="1" height="1" fill="#f8f8f2"/><rect x="1798" y="194" width="14" height="1" fill="#f8f8f2"/><rect x="1813" y="194" width="1" height="1" fill="#f92672"/><rect x="1815" y="194" width="5" height="1" fill="#a6e22e"/><rect x="1820" y="194" width="1" height="1" fill="#ffd700"/><rect x="1821" y="194" width="3" height="1" fill="#e6db74"/><rect x="1825" y="194" width="3" height="1" fill="#e6db74"/><rect x="1829" y="194" width="4" height="1" fill="#e6db74"/><rect x="1834" y="194" width="2" height="1" fill="#e6db74"/><rect x="1837" y="194" width="8" height="1" fill="#e6db74"/><rect x="1846" y="194" width="7" height="1" fill="#e6db74"/><rect x="1854" y="194" width="5" height="1" fill="#e6db74"/><rect x="1859" y="194" width="2" height="1" fill="#ae81ff"/><rect x="1862" y="194" width="2" height="1" fill="#e6db74"/><rect x="1865" y="194" width="1" height="1" fill="#e6db74"/><rect x="1866" y="194" width="1" height="1" fill="#ffd700"/><rect x="1798" y="196" width="2" height="1" fill="#f92672"/><rect x="1801" y="196" width="14" height="1" fill="#f8f8f2"/><rect x="1816" y="196" width="2" height="1" fill="#f92672"/><rect x="1819" y="196" width="3" height="1" fill="#e6db74"/><rect x="1822" y="196" width="1" height="1" fill="#f8f8f2"/><rect x="1802" y="198" width="5" height="1" fill="#a6e22e"/><rect x="1807" y="198" width="1" height="1" fill="#ffd700"/><rect x="1808" y="198" width="4" height="1" fill="#e6db74"/><rect x="1812" y="198" width="1" height="1" fill="#ffd700"/><rect x="1802" y="200" width="4" height="1" fill="#f8f8f2"/><rect x="1806" y="200" width="1" height="1" fill="#ffd700"/><rect x="1807" y="200" width="1" height="1" fill="#ffd700"/><rect x="1798" y="202" width="4" height="1" fill="#f92672"/><rect x="1803" y="202" width="14" height="1" fill="#f8f8f2"/><rect x="1818" y="202" width="2" height="1" fill="#f92672"/><rect x="1821" y="202" width="3" height="1" fill="#e6db74"/><rect x="1824" y="202" width="1" height="1" fill="#f8f8f2"/><rect x="1802" y="204" width="5" height="1" fill="#a6e22e"/><rect x="1807" y="204" width="1" height="1" fill="#ffd700"/><rect x="1808" y="204" width="4" height="1" fill="#e6db74"/><rect x="1813" y="204" width="3" height="1" fill="#e6db74"/><rect x="1817" y="204" width="3" height="1" fill="#e6db74"/><rect x="1821" y="204" width="2" height="1" fill="#e6db74"/><rect x="1823" y="204" width="1" height="1" fill="#ffd700"/><rect x="1802" y="206" width="4" height="1" fill="#f8f8f2"/><rect x="1806" y="206" width="1" height="1" fill="#ffd700"/><rect x="1807" y="206" width="1" height="1" fill="#ffd700"/><rect x="1798" y="208" width="4" height="1" fill="#f92672"/><rect x="1802" y="208" width="1" height="1" fill="#f8f8f2"/><rect x="1802" y="210" width="5" height="1" fill="#a6e22e"/><rect x="1807" y="210" width="1" height="1" fill="#ffd700"/><rect x="1808" y="210" width="8" height="1" fill="#e6db74"/><rect x="1817" y="210" width="8" height="1" fill="#e6db74"/><rect x="1825" y="210" width="1" height="1" fill="#ffd700"/><rect x="1802" y="212" width="5" height="1" fill="#a6e22e"/><rect x="1807" y="212" width="1" height="1" fill="#ffd700"/><rect x="1808" y="212" width="1" height="1" fill="#ffd700"/><rect x="1794" y="224" width="5" height="1" fill="#a6e22e"/><rect x="1799" y="224" width="1" height="1" fill="#ffd700"/><rect x="1800" y="224" width="8" height="1" fill="#e6db74"/><rect x="1809" y="224" width="2" height="1" fill="#e6db74"/><rect x="1812" y="224" width="7" height="1" fill="#e6db74"/><rect x="1820" y="224" width="11" height="1" fill="#e6db74"/><rect x="1831" y="224" width="1" height="1" fill="#ffd700"/><rect x="1794" y="226" width="5" height="1" fill="#a6e22e"/><rect x="1799" y="226" width="1" height="1" fill="#ffd700"/><rect x="1800" y="226" width="1" height="1" fill="#ffd700"/></g><g opacity="0.22"><rect x="1794" y="93" width="1" height="1" fill="#88846f"/><rect x="1796" y="93" width="7" height="1" fill="#88846f"/><rect x="1804" y="93" width="10" height="1" fill="#88846f"/><rect x="1794" y="95" width="6" height="1" fill="#f92672"/><rect x="1801" y="95" width="2" height="1" fill="#a6e22e"/><rect x="1794" y="97" width="4" height="1" fill="#f92672"/><rect x="1799" y="97" width="9" height="1" fill="#a6e22e"/><rect x="1809" y="97" width="6" height="1" fill="#f92672"/><rect x="1816" y="97" width="7" height="1" fill="#a6e22e"/><rect x="1794" y="99" width="6" height="1" fill="#f92672"/><rect x="1801" y="99" width="6" height="1" fill="#a6e22e"/><rect x="1794" y="103" width="3" height="1" fill="#66d9ef"/><rect x="1798" y="103" width="4" height="1" fill="#a6e22e"/><rect x="1802" y="103" width="1" height="1" fill="#ffd700"/><rect x="1803" y="103" width="1" height="1" fill="#ffd700"/><rect x="1804" y="103" width="1" height="1" fill="#f8f8f2"/><rect x="1798" y="107" width="3" height="1" fill="#f92672"/><rect x="1801" y="107" width="1" height="1" fill="#f8f8f2"/><rect x="1802" y="109" width="9" height="1" fill="#f8f8f2"/><rect x="1812" y="109" width="1" height="1" fill="#f92672"/><rect x="1814" y="109" width="5" height="1" fill="#a6e22e"/><rect x="1819" y="109" width="1" height="1" fill="#ffd700"/><rect x="1820" y="109" width="6" height="1" fill="#e6db74"/><rect x="1827" y="109" width="5" height="1" fill="#e6db74"/><rect x="1833" y="109" width="5" height="1" fill="#e6db74"/><rect x="1839" y="109" width="2" height="1" fill="#e6db74"/><rect x="1842" y="109" width="1" height="1" fill="#e6db74"/><rect x="1843" y="109" width="1" height="1" fill="#ffd700"/><rect x="1802" y="111" width="5" height="1" fill="#f8f8f2"/><rect x="1808" y="111" width="1" height="1" fill="#f92672"/><rect x="1810" y="111" width="7" height="1" fill="#a6e22e"/><rect x="1817" y="111" width="1" height="1" fill="#ffd700"/><rect x="1818" y="111" width="9" height="1" fill="#f8f8f2"/><rect x="1827" y="111" width="1" height="1" fill="#ffd700"/><rect x="1802" y="115" width="5" height="1" fill="#a6e22e"/><rect x="1807" y="115" width="1" height="1" fill="#ffd700"/><rect x="1808" y="115" width="7" height="1" fill="#e6db74"/><rect x="1816" y="115" width="1" height="1" fill="#e6db74"/><rect x="1817" y="115" width="1" height="1" fill="#f8f8f2"/><rect x="1818" y="115" width="5" height="1" fill="#f8f8f2"/><rect x="1823" y="115" width="1" height="1" fill="#f8f8f2"/><rect x="1824" y="115" width="5" height="1" fill="#f8f8f2"/><rect x="1829" y="115" width="1" height="1" fill="#ffd700"/><rect x="1802" y="117" width="15" height="1" fill="#f8f8f2"/><rect x="1818" y="117" width="1" height="1" fill="#f92672"/><rect x="1820" y="117" width="5" height="1" fill="#f8f8f2"/><rect x="1825" y="117" width="1" height="1" fill="#f8f8f2"/><rect x="1826" y="117" width="5" height="1" fill="#f8f8f2"/><rect x="1832" y="117" width="1" height="1" fill="#f92672"/><rect x="1834" y="117" width="6" height="1" fill="#e6db74"/><rect x="1802" y="119" width="15" height="1" fill="#f8f8f2"/><rect x="1818" y="119" width="1" height="1" fill="#f92672"/><rect x="1820" y="119" width="5" height="1" fill="#f8f8f2"/><rect x="1825" y="119" width="1" height="1" fill="#f8f8f2"/><rect x="1826" y="119" width="5" height="1" fill="#f8f8f2"/><rect x="1832" y="119" width="1" height="1" fill="#f92672"/><rect x="1834" y="119" width="6" height="1" fill="#e6db74"/><rect x="1802" y="121" width="6" height="1" fill="#f8f8f2"/><rect x="1809" y="121" width="1" height="1" fill="#f92672"/><rect x="1811" y="121" width="5" height="1" fill="#f8f8f2"/><rect x="1816" y="121" width="1" height="1" fill="#f8f8f2"/><rect x="1817" y="121" width="7" height="1" fill="#f8f8f2"/><rect x="1824" y="121" width="1" height="1" fill="#f8f8f2"/><rect x="1825" y="121" width="22" height="1" fill="#a6e22e"/><rect x="1847" y="121" width="1" height="1" fill="#ffd700"/><rect x="1848" y="121" width="5" height="1" fill="#ae81ff"/><rect x="1853" y="121" width="1" height="1" fill="#ffd700"/><rect x="1802" y="123" width="6" height="1" fill="#f8f8f2"/><rect x="1808" y="123" width="1" height="1" fill="#f8f8f2"/><rect x="1809" y="123" width="8" height="1" fill="#a6e22e"/><rect x="1817" y="123" width="1" height="1" fill="#ffd700"/><rect x="1818" y="123" width="1" height="1" fill="#ffd700"/><rect x="1802" y="127" width="3" height="1" fill="#f8f8f2"/><rect x="1807" y="127" width="1" height="1" fill="#f92672"/><rect x="1809" y="127" width="7" height="1" fill="#a6e22e"/><rect x="1816" y="127" width="1" height="1" fill="#ffd700"/><rect x="1817" y="127" width="9" height="1" fill="#f8f8f2"/><rect x="1826" y="127" width="1" height="1" fill="#ffd700"/><rect x="1802" y="129" width="12" height="1" fill="#f8f8f2"/><rect x="1815" y="129" width="1" height="1" fill="#f92672"/><rect x="1817" y="129" width="3" height="1" fill="#f8f8f2"/><rect x="1820" y="129" width="1" height="1" fill="#f8f8f2"/><rect x="1821" y="129" width="7" height="1" fill="#f8f8f2"/><rect x="1828" y="129" width="1" height="1" fill="#f8f8f2"/><rect x="1829" y="129" width="14" height="1" fill="#a6e22e"/><rect x="1843" y="129" width="1" height="1" fill="#ffd700"/><rect x="1844" y="129" width="1" height="1" fill="#ffd700"/><rect x="1802" y="131" width="12" height="1" fill="#f8f8f2"/><rect x="1814" y="131" width="1" height="1" fill="#f8f8f2"/><rect x="1815" y="131" width="8" height="1" fill="#a6e22e"/><rect x="1823" y="131" width="1" height="1" fill="#ffd700"/><rect x="1824" y="131" width="1" height="1" fill="#ffd700"/><rect x="1802" y="135" width="2" height="1" fill="#a6e22e"/><rect x="1804" y="135" width="1" height="1" fill="#f8f8f2"/><rect x="1805" y="135" width="6" height="1" fill="#a6e22e"/><rect x="1811" y="135" width="1" height="1" fill="#ffd700"/><rect x="1812" y="135" width="15" height="1" fill="#f8f8f2"/><rect x="1827" y="135" width="1" height="1" fill="#f8f8f2"/><rect x="1829" y="135" width="11" height="1" fill="#e6db74"/><rect x="1840" y="135" width="1" height="1" fill="#ffd700"/><rect x="1849" y="135" width="2" height="1" fill="#a6e22e"/><rect x="1851" y="135" width="1" height="1" fill="#f8f8f2"/><rect x="1852" y="135" width="6" height="1" fill="#a6e22e"/><rect x="1858" y="135" width="1" height="1" fill="#ffd700"/><rect x="1859" y="135" width="15" height="1" fill="#f8f8f2"/><rect x="1874" y="135" width="1" height="1" fill="#f8f8f2"/><rect x="1876" y="135" width="11" height="1" fill="#e6db74"/><rect x="1887" y="135" width="1" height="1" fill="#ffd700"/><rect x="1802" y="139" width="2" height="1" fill="#a6e22e"/><rect x="1804" y="139" width="1" height="1" fill="#f8f8f2"/><rect x="1805" y="139" width="6" height="1" fill="#a6e22e"/><rect x="1811" y="139" width="1" height="1" fill="#ffd700"/><rect x="1812" y="139" width="7" height="1" fill="#e6db74"/><rect x="1820" y="139" width="2" height="1" fill="#e6db74"/><rect x="1823" y="139" width="9" height="1" fill="#e6db74"/><rect x="1833" y="139" width="2" height="1" fill="#e6db74"/><rect x="1836" y="139" width="9" height="1" fill="#e6db74"/><rect x="1846" y="139" width="2" height="1" fill="#e6db74"/><rect x="1849" y="139" width="4" height="1" fill="#e6db74"/><rect x="1854" y="139" width="11" height="1" fill="#e6db74"/><rect x="1865" y="139" width="1" height="1" fill="#ffd700"/><rect x="1867" y="139" width="5" height="1" fill="#88846f"/><rect x="1873" y="139" width="8" height="1" fill="#88846f"/><rect x="1882" y="139" width="7" height="1" fill="#88846f"/><rect x="1890" y="139" width="2" height="1" fill="#88846f"/><rect x="1893" y="139" width="2" height="1" fill="#88846f"/><rect x="1896" y="139" width="5" height="1" fill="#88846f"/><rect x="1802" y="141" width="2" height="1" fill="#a6e22e"/><rect x="1804" y="141" width="1" height="1" fill="#f8f8f2"/><rect x="1805" y="141" width="6" height="1" fill="#a6e22e"/><rect x="1811" y="141" width="1" height="1" fill="#ffd700"/><rect x="1812" y="141" width="4" height="1" fill="#e6db74"/><rect x="1817" y="141" width="10" height="1" fill="#e6db74"/><rect x="1827" y="141" width="1" height="1" fill="#ffd700"/><rect x="1802" y="143" width="2" height="1" fill="#a6e22e"/><rect x="1804" y="143" width="1" height="1" fill="#f8f8f2"/><rect x="1805" y="143" width="6" height="1" fill="#a6e22e"/><rect x="1811" y="143" width="1" height="1" fill="#ffd700"/><rect x="1812" y="143" width="4" height="1" fill="#e6db74"/><rect x="1817" y="143" width="10" height="1" fill="#e6db74"/><rect x="1827" y="143" width="1" height="1" fill="#ffd700"/><rect x="1802" y="145" width="2" height="1" fill="#a6e22e"/><rect x="1804" y="145" width="1" height="1" fill="#f8f8f2"/><rect x="1805" y="145" width="6" height="1" fill="#a6e22e"/><rect x="1811" y="145" width="1" height="1" fill="#ffd700"/><rect x="1812" y="145" width="12" height="1" fill="#e6db74"/><rect x="1824" y="145" width="1" height="1" fill="#f8f8f2"/><rect x="1826" y="145" width="15" height="1" fill="#f8f8f2"/><rect x="1841" y="145" width="1" height="1" fill="#ffd700"/><rect x="1802" y="149" width="5" height="1" fill="#a6e22e"/><rect x="1807" y="149" width="1" height="1" fill="#ffd700"/><rect x="1808" y="149" width="9" height="1" fill="#e6db74"/><rect x="1818" y="149" width="11" height="1" fill="#e6db74"/><rect x="1829" y="149" width="1" height="1" fill="#ffd700"/><rect x="1802" y="151" width="5" height="1" fill="#a6e22e"/><rect x="1807" y="151" width="1" height="1" fill="#ffd700"/><rect x="1808" y="151" width="1" height="1" fill="#ffd700"/><rect x="1798" y="155" width="6" height="1" fill="#f92672"/><rect x="1805" y="155" width="9" height="1" fill="#a6e22e"/><rect x="1814" y="155" width="1" height="1" fill="#f8f8f2"/><rect x="1802" y="157" width="5" height="1" fill="#a6e22e"/><rect x="1807" y="157" width="1" height="1" fill="#ffd700"/><rect x="1808" y="157" width="6" height="1" fill="#e6db74"/><rect x="1815" y="157" width="8" height="1" fill="#e6db74"/><rect x="1824" y="157" width="1" height="1" fill="#e6db74"/><rect x="1826" y="157" width="5" height="1" fill="#e6db74"/><rect x="1832" y="157" width="4" height="1" fill="#e6db74"/><rect x="1836" y="157" width="1" height="1" fill="#ffd700"/><rect x="1802" y="159" width="4" height="1" fill="#a6e22e"/><rect x="1806" y="159" width="1" height="1" fill="#ffd700"/><rect x="1807" y="159" width="1" height="1" fill="#ffd700"/><rect x="1794" y="165" width="3" height="1" fill="#66d9ef"/><rect x="1798" y="165" width="5" height="1" fill="#a6e22e"/><rect x="1803" y="165" width="1" height="1" fill="#ffd700"/><rect x="1804" y="165" width="1" height="1" fill="#ffd700"/><rect x="1805" y="165" width="1" height="1" fill="#f8f8f2"/><rect x="1798" y="167" width="6" height="1" fill="#f8f8f2"/><rect x="1805" y="167" width="1" height="1" fill="#f92672"/><rect x="1807" y="167" width="5" height="1" fill="#a6e22e"/><rect x="1812" y="167" width="1" height="1" fill="#ffd700"/><rect x="1813" y="167" width="9" height="1" fill="#e6db74"/><rect x="1823" y="167" width="5" height="1" fill="#e6db74"/><rect x="1829" y="167" width="6" height="1" fill="#e6db74"/><rect x="1836" y="167" width="5" height="1" fill="#e6db74"/><rect x="1842" y="167" width="4" height="1" fill="#e6db74"/><rect x="1847" y="167" width="6" height="1" fill="#e6db74"/><rect x="1854" y="167" width="4" height="1" fill="#e6db74"/><rect x="1858" y="167" width="2" height="1" fill="#ae81ff"/><rect x="1861" y="167" width="2" height="1" fill="#e6db74"/><rect x="1864" y="167" width="1" height="1" fill="#e6db74"/><rect x="1865" y="167" width="1" height="1" fill="#ffd700"/><rect x="1798" y="171" width="2" height="1" fill="#f92672"/><rect x="1801" y="171" width="6" height="1" fill="#f8f8f2"/><rect x="1808" y="171" width="2" height="1" fill="#f92672"/><rect x="1811" y="171" width="3" height="1" fill="#e6db74"/><rect x="1814" y="171" width="1" height="1" fill="#f8f8f2"/><rect x="1802" y="173" width="4" height="1" fill="#a6e22e"/><rect x="1806" y="173" width="1" height="1" fill="#ffd700"/><rect x="1807" y="173" width="1" height="1" fill="#ffd700"/><rect x="1798" y="175" width="4" height="1" fill="#f92672"/><rect x="1803" y="175" width="6" height="1" fill="#f8f8f2"/><rect x="1810" y="175" width="2" height="1" fill="#f92672"/><rect x="1813" y="175" width="3" height="1" fill="#e6db74"/><rect x="1816" y="175" width="1" height="1" fill="#f8f8f2"/><rect x="1802" y="177" width="5" height="1" fill="#a6e22e"/><rect x="1807" y="177" width="1" height="1" fill="#ffd700"/><rect x="1808" y="177" width="4" height="1" fill="#e6db74"/><rect x="1813" y="177" width="2" height="1" fill="#e6db74"/><rect x="1815" y="177" width="1" height="1" fill="#ffd700"/><rect x="1802" y="179" width="4" height="1" fill="#f8f8f2"/><rect x="1806" y="179" width="1" height="1" fill="#ffd700"/><rect x="1807" y="179" width="1" height="1" fill="#ffd700"/><rect x="1798" y="181" width="4" height="1" fill="#f92672"/><rect x="1802" y="181" width="1" height="1" fill="#f8f8f2"/><rect x="1802" y="183" width="5" height="1" fill="#a6e22e"/><rect x="1807" y="183" width="1" height="1" fill="#ffd700"/><rect x="1808" y="183" width="8" height="1" fill="#e6db74"/><rect x="1817" y="183" width="8" height="1" fill="#e6db74"/><rect x="1826" y="183" width="6" height="1" fill="#e6db74"/><rect x="1833" y="183" width="6" height="1" fill="#e6db74"/><rect x="1839" y="183" width="1" height="1" fill="#ffd700"/><rect x="1802" y="185" width="5" height="1" fill="#a6e22e"/><rect x="1807" y="185" width="1" height="1" fill="#ffd700"/><rect x="1808" y="185" width="1" height="1" fill="#ffd700"/><rect x="1794" y="191" width="3" height="1" fill="#66d9ef"/><rect x="1798" y="191" width="5" height="1" fill="#a6e22e"/><rect x="1803" y="191" width="1" height="1" fill="#ffd700"/><rect x="1804" y="191" width="1" height="1" fill="#ffd700"/><rect x="1805" y="191" width="1" height="1" fill="#f8f8f2"/><rect x="1798" y="195" width="14" height="1" fill="#f8f8f2"/><rect x="1813" y="195" width="1" height="1" fill="#f92672"/><rect x="1815" y="195" width="5" height="1" fill="#a6e22e"/><rect x="1820" y="195" width="1" height="1" fill="#ffd700"/><rect x="1821" y="195" width="3" height="1" fill="#e6db74"/><rect x="1825" y="195" width="3" height="1" fill="#e6db74"/><rect x="1829" y="195" width="4" height="1" fill="#e6db74"/><rect x="1834" y="195" width="2" height="1" fill="#e6db74"/><rect x="1837" y="195" width="8" height="1" fill="#e6db74"/><rect x="1846" y="195" width="7" height="1" fill="#e6db74"/><rect x="1854" y="195" width="5" height="1" fill="#e6db74"/><rect x="1859" y="195" width="2" height="1" fill="#ae81ff"/><rect x="1862" y="195" width="2" height="1" fill="#e6db74"/><rect x="1865" y="195" width="1" height="1" fill="#e6db74"/><rect x="1866" y="195" width="1" height="1" fill="#ffd700"/><rect x="1798" y="197" width="2" height="1" fill="#f92672"/><rect x="1801" y="197" width="14" height="1" fill="#f8f8f2"/><rect x="1816" y="197" width="2" height="1" fill="#f92672"/><rect x="1819" y="197" width="3" height="1" fill="#e6db74"/><rect x="1822" y="197" width="1" height="1" fill="#f8f8f2"/><rect x="1802" y="199" width="5" height="1" fill="#a6e22e"/><rect x="1807" y="199" width="1" height="1" fill="#ffd700"/><rect x="1808" y="199" width="4" height="1" fill="#e6db74"/><rect x="1812" y="199" width="1" height="1" fill="#ffd700"/><rect x="1802" y="201" width="4" height="1" fill="#f8f8f2"/><rect x="1806" y="201" width="1" height="1" fill="#ffd700"/><rect x="1807" y="201" width="1" height="1" fill="#ffd700"/><rect x="1798" y="203" width="4" height="1" fill="#f92672"/><rect x="1803" y="203" width="14" height="1" fill="#f8f8f2"/><rect x="1818" y="203" width="2" height="1" fill="#f92672"/><rect x="1821" y="203" width="3" height="1" fill="#e6db74"/><rect x="1824" y="203" width="1" height="1" fill="#f8f8f2"/><rect x="1802" y="205" width="5" height="1" fill="#a6e22e"/><rect x="1807" y="205" width="1" height="1" fill="#ffd700"/><rect x="1808" y="205" width="4" height="1" fill="#e6db74"/><rect x="1813" y="205" width="3" height="1" fill="#e6db74"/><rect x="1817" y="205" width="3" height="1" fill="#e6db74"/><rect x="1821" y="205" width="2" height="1" fill="#e6db74"/><rect x="1823" y="205" width="1" height="1" fill="#ffd700"/><rect x="1802" y="207" width="4" height="1" fill="#f8f8f2"/><rect x="1806" y="207" width="1" height="1" fill="#ffd700"/><rect x="1807" y="207" width="1" height="1" fill="#ffd700"/><rect x="1798" y="209" width="4" height="1" fill="#f92672"/><rect x="1802" y="209" width="1" height="1" fill="#f8f8f2"/><rect x="1802" y="211" width="5" height="1" fill="#a6e22e"/><rect x="1807" y="211" width="1" height="1" fill="#ffd700"/><rect x="1808" y="211" width="8" height="1" fill="#e6db74"/><rect x="1817" y="211" width="8" height="1" fill="#e6db74"/><rect x="1825" y="211" width="1" height="1" fill="#ffd700"/><rect x="1802" y="213" width="5" height="1" fill="#a6e22e"/><rect x="1807" y="213" width="1" height="1" fill="#ffd700"/><rect x="1808" y="213" width="1" height="1" fill="#ffd700"/><rect x="1794" y="225" width="5" height="1" fill="#a6e22e"/><rect x="1799" y="225" width="1" height="1" fill="#ffd700"/><rect x="1800" y="225" width="8" height="1" fill="#e6db74"/><rect x="1809" y="225" width="2" height="1" fill="#e6db74"/><rect x="1812" y="225" width="7" height="1" fill="#e6db74"/><rect x="1820" y="225" width="11" height="1" fill="#e6db74"/><rect x="1831" y="225" width="1" height="1" fill="#ffd700"/><rect x="1794" y="227" width="5" height="1" fill="#a6e22e"/><rect x="1799" y="227" width="1" height="1" fill="#ffd700"/><rect x="1800" y="227" width="1" height="1" fill="#ffd700"/></g></svg>
<div class="abs" style="left:1906px;top:92px;width:1px;height:744px;background:#3b3c35"></div>
<div class="abs" style="left:1906px;top:92px;width:13px;height:1px;background:#3b3c35"></div>
<div class="abs" style="left:1907px;top:236px;width:12px;height:2px;background:#c8c8c4"></div>
<div class="abs" style="left:1849px;top:134px;width:2px;height:2px;background:#e51400"></div>
<div class="abs" style="left:1911px;top:238px;width:4px;height:6px;background:#a0a09c"></div>
<div class="abs" style="left:1915px;top:238px;width:4px;height:6px;background:#e51400"></div>
<div class="abs" style="left:48px;top:836px;width:1871px;height:1px;background:#414339"></div>
<div class="ui" style="left:68px;top:848px;font-size:11px;line-height:14px;color:#97958a;font-weight:400;transform:scaleX(0.8685);transform-origin:0 0">PROBLEMS</div>
<div class="ui" style="left:164px;top:848px;font-size:11px;line-height:14px;color:#97958a;font-weight:400;transform:scaleX(0.8887);transform-origin:0 0">OUTPUT</div>
<div class="ui" style="left:229px;top:848px;font-size:11px;line-height:14px;color:#97958a;font-weight:400;transform:scaleX(0.8857);transform-origin:0 0">DEBUG CONSOLE</div>
<div class="ui" style="left:338px;top:848px;font-size:11px;line-height:14px;color:#e7e7e7;font-weight:400;transform:scaleX(0.9187);transform-origin:0 0">TERMINAL</div>
<div class="ui" style="left:414px;top:848px;font-size:11px;line-height:14px;color:#97958a;font-weight:400;transform:scaleX(0.8275);transform-origin:0 0">PORTS</div>
<div class="abs" style="left:126px;top:846px;width:16px;height:16px;border-radius:8px;background:#007acc;color:#fff;font:10px/16px 'Liberation Sans',sans-serif;text-align:center">2</div>
<div class="abs" style="left:336px;top:865px;width:56px;height:1px;background:#cfcfca"></div>
<svg style="position:absolute;left:1801px;top:847px" width="15" height="15" viewBox="0 0 15 15" ><path d="M7.5 1 V14 M1 7.5 H14" fill="none" stroke="#cccccc" stroke-width="1.2" stroke-linejoin="round"/></svg>
<svg style="position:absolute;left:1819px;top:851px" width="10" height="7" viewBox="0 0 10 7" ><path d="M1 1.5 L5 5.5 L9 1.5" fill="none" stroke="#cccccc" stroke-width="1.1" stroke-linejoin="round"/></svg>
<svg style="position:absolute;left:1839px;top:852px" width="16" height="4" viewBox="0 0 16 4" ><circle cx="2" cy="2" r="1.1" fill="#cccccc"/><circle cx="7" cy="2" r="1.1" fill="#cccccc"/><circle cx="12" cy="2" r="1.1" fill="#cccccc"/></svg>
<svg style="position:absolute;left:1865px;top:849px" width="12" height="8" viewBox="0 0 12 8" ><path d="M1 6.5 L6 1.5 L11 6.5" fill="none" stroke="#cccccc" stroke-width="1.1" stroke-linejoin="round"/></svg>
<svg style="position:absolute;left:1891px;top:848px" width="12" height="12" viewBox="0 0 12 12" ><path d="M1 1 L11 11 M11 1 L1 11" fill="none" stroke="#cccccc" stroke-width="1.1" stroke-linejoin="round"/></svg>
<div class="tl" style="top:872px"><span class="tf">PS C:\Mon portfolio V2&gt; &amp; </span><span class="ty">C:/Users/aminf/AppData/Local/Microsoft/WindowsApps/python3.13.exe</span><span class="tf"> c:/Python_Projets/video_downloader.py</span></div>
<div class="tl" style="top:889px"><span class="tf">Welcome to YouTube downloader</span></div>
<div class="tl" style="top:906px"><span class="tf">Download video (press «d»)/ Quit (press «q»)</span></div>
<div class="tl" style="top:923px"><span class="tf"> -&gt;</span></div>
<div class="tl" style="top:940px"><span class="tf">Invalid command, please retry</span></div>
<div class="tl" style="top:957px"><span class="tf">Download video (press «d»)/ Quit (press «q»)</span></div>
<div class="tl" style="top:974px"><span class="tf"> -&gt; d</span></div>
<div class="tl" style="top:991px"><span class="tf">Enter url's video -&gt; </span></div>
<div class="abs" style="left:215px;top:990px;width:8px;height:17px;border:1px solid #f8f8f2"></div>
<div class="abs" style="left:1786px;top:871px;width:15px;height:187px;border:1px solid #414339;border-bottom:none"></div>
<svg style="position:absolute;left:1811px;top:874px" width="17" height="16" viewBox="0 0 17 16" ><g fill="none" stroke="#cccccc" stroke-width="1.1"><path d="M2.5 1.5 H15.5 L14.5 13.5 H1.5 Z"/><path d="M4 5 L7 7.3 L4 9.5 M7.5 10.5 H11"/></g></svg>
<div class="ui" style="left:1831px;top:875px;font-size:13px;line-height:16px;color:#cca700;font-weight:400;letter-spacing:-0.198px">powersh...</div>
<svg style="position:absolute;left:1894px;top:874px" width="16" height="15" viewBox="0 0 16 15" ><g fill="none" stroke="#cca700" stroke-width="1.2" stroke-linejoin="round"><path d="M8 1.5 L15 13.8 H1 Z"/><path d="M8 5.5 V9.5 M8 11 V12"/></g></svg>
<svg style="position:absolute;left:1811px;top:896px" width="17" height="16" viewBox="0 0 17 16" ><g fill="none" stroke="#cccccc" stroke-width="1.1"><rect x="1.5" y="1.5" width="13" height="12.5" rx="1"/><path d="M4 5 L7 7.3 L4 9.5 M7.5 10.5 H11"/></g></svg>
<div class="ui" style="left:1831px;top:897px;font-size:13px;line-height:16px;color:#cccccc;font-weight:400;letter-spacing:-0.081px">Python</div>
<div class="abs" style="left:0;top:1058px;width:1919px;height:21px;background:#414339"></div>
<div class="abs" style="left:0;top:1058px;width:34px;height:21px;background:#ac6218"></div>
<svg style="position:absolute;left:11px;top:1061px" width="13" height="14" viewBox="0 0 13 14" ><g fill="none" stroke="#ffffff" stroke-width="1.2"><path d="M1.5 6 L5.5 9.5 L1.5 13 M10.5 1 L6.5 4.5 L10.5 8"/></g></svg>
<svg style="position:absolute;left:42px;top:1062px" width="14" height="14" viewBox="0 0 14 14" ><g fill="none" stroke="#ffffff" stroke-width="1.1"><circle cx="7" cy="7" r="6"/><path d="M4.5 4.5 L9.5 9.5 M9.5 4.5 L4.5 9.5"/></g></svg>
<div class="ui" style="left:58px;top:1062px;font-size:12px;line-height:16px;color:#ffffff;font-weight:400">2</div>
<svg style="position:absolute;left:69px;top:1062px" width="14" height="13" viewBox="0 0 14 13" ><g fill="none" stroke="#ffffff" stroke-width="1.1" stroke-linejoin="round"><path d="M7 1 L13 12 H1 Z"/><path d="M7 5 V9"/></g></svg>
<div class="ui" style="left:86px;top:1062px;font-size:12px;line-height:16px;color:#ffffff;font-weight:400">0</div>
<div class="ui" style="left:1382px;top:1062px;font-size:12px;line-height:16px;color:#ffffff;font-weight:400;letter-spacing:-0.222px">Ln 22, Col 48</div>
<div class="ui" style="left:1466px;top:1062px;font-size:12px;line-height:16px;color:#ffffff;font-weight:400;transform:scaleX(0.9180);transform-origin:0 0">Spaces: 4</div>
<div class="ui" style="left:1531px;top:1062px;font-size:12px;line-height:16px;color:#ffffff;font-weight:400;transform:scaleX(0.9412);transform-origin:0 0">UTF-8</div>
<div class="ui" style="left:1579px;top:1062px;font-size:12px;line-height:16px;color:#ffffff;font-weight:400;transform:scaleX(0.8455);transform-origin:0 0">CRLF</div>
<div class="ui" style="left:1639px;top:1062px;font-size:12px;line-height:16px;color:#ffffff;font-weight:400;letter-spacing:0.023px">Python</div>
<div class="ui" style="left:1835px;top:1062px;font-size:12px;line-height:16px;color:#ffffff;font-weight:400;letter-spacing:-0.123px">Go Live</div>
<div class="ui" style="left:1620px;top:1062px;font-size:12px;line-height:16px;color:#ffffff;font-weight:400">{ }</div>
<div class="abs" style="left:1682px;top:1058px;width:129px;height:21px;background:#7a6400"></div>
<svg style="position:absolute;left:1691px;top:1062px" width="15" height="14" viewBox="0 0 15 14" ><g fill="none" stroke="#ffffff" stroke-width="1.1" stroke-linejoin="round"><path d="M7.5 1 L14 12.5 H1 Z"/><path d="M7.5 5 V9 M7.5 10.3 V11.3"/></g></svg>
<div class="ui" style="left:1709px;top:1062px;font-size:12px;line-height:16px;color:#ffffff;font-weight:400;letter-spacing:-0.058px">Select Interpreter</div>
<svg style="position:absolute;left:1819px;top:1062px" width="12" height="14" viewBox="0 0 12 14" ><g fill="none" stroke="#ffffff" stroke-width="1.1"><circle cx="6" cy="5.5" r="1.6"/><path d="M3 9 A4.5 4.5 0 1 1 9 9 M6 7 V13"/></g></svg>
<svg style="position:absolute;left:1891px;top:1061px" width="13" height="15" viewBox="0 0 13 15" ><g fill="none" stroke="#ffffff" stroke-width="1.1" stroke-linejoin="round"><path d="M2 11 C3 9.5 3 8 3 6 C3 3.5 4.5 2 6.5 2 C8.5 2 10 3.5 10 6 C10 8 10 9.5 11 11 Z"/><path d="M5 13 H8"/></g></svg>
</body></html>
